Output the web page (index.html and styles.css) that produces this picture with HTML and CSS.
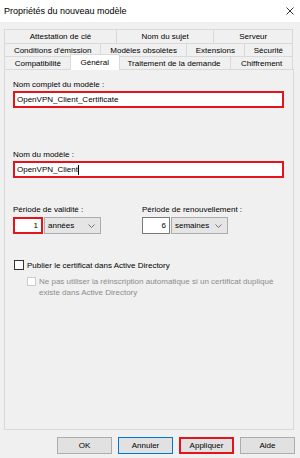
FILE: index.html
```html
<!DOCTYPE html>
<html lang="fr">
<head>
    <meta charset="UTF-8">
    <title>Propriétés du nouveau modèle</title>
    <link rel="stylesheet" href="styles.css">
</head>
<body>
    <div class="dialog">
        <div class="titlebar">
            <span class="title">Propriétés du nouveau modèle</span>
            <svg class="close" width="8" height="8" viewBox="0 0 8 8">
                <path d="M0.5 0.5 L7.5 7.5 M7.5 0.5 L0.5 7.5" stroke="#222" stroke-width="0.9" fill="none"/>
            </svg>
        </div>

        <div class="tabs">
            <div class="tab-row first">
                <div class="tab">Attestation de clé</div>
                <div class="tab">Nom du sujet</div>
                <div class="tab">Serveur</div>
            </div>
            <div class="tab-row">
                <div class="tab">Conditions d'émission</div>
                <div class="tab">Modèles obsolètes</div>
                <div class="tab">Extensions</div>
                <div class="tab">Sécurité</div>
            </div>
            <div class="tab-row">
                <div class="tab">Compatibilité</div>
                <div class="tab active">Général</div>
                <div class="tab">Traitement de la demande</div>
                <div class="tab">Chiffrement</div>
            </div>
        </div>

        <div class="page">
            <div class="field-label">Nom complet du modèle :</div>
            <div class="text-input marked">OpenVPN_Client_Certificate</div>

            <div class="field-label second">Nom du modèle :</div>
            <div class="text-input marked">OpenVPN_Client<span class="caret"></span></div>

            <div class="periods">
                <div class="period">
                    <div class="field-label">Période de validité :</div>
                    <div class="period-inputs">
                        <div class="num-input marked">1</div>
                        <div class="select">années
                            <svg width="7" height="4" viewBox="0 0 7 4"><path d="M0.5 0.5 L3.5 3.5 L6.5 0.5" stroke="#555" stroke-width="0.8" fill="none"/></svg>
                        </div>
                    </div>
                </div>
                <div class="period">
                    <div class="field-label">Période de renouvellement :</div>
                    <div class="period-inputs">
                        <div class="num-input">6</div>
                        <div class="select">semaines
                            <svg width="7" height="4" viewBox="0 0 7 4"><path d="M0.5 0.5 L3.5 3.5 L6.5 0.5" stroke="#555" stroke-width="0.8" fill="none"/></svg>
                        </div>
                    </div>
                </div>
            </div>

            <div class="check">
                <span class="box"></span>
                <span>Publier le certificat dans Active Directory</span>
            </div>
            <div class="check sub disabled">
                <span class="box"></span>
                <span>Ne pas utiliser la réinscription automatique si un certificat dupliqué existe dans Active Directory</span>
            </div>
        </div>

        <div class="buttons">
            <div class="btn">OK</div>
            <div class="btn default">Annuler</div>
            <div class="btn marked">Appliquer</div>
            <div class="btn">Aide</div>
        </div>
    </div>
</body>
</html>
```

FILE: styles.css
```css
body, html {
    margin: 0;
    padding: 0;
    background-color: #f0f0f0;
    font-family: 'Liberation Sans', Arial, sans-serif;
    font-size: 8px;
    color: #000000;
}

.dialog {
    width: 300px;
    height: 458px;
    overflow: hidden;
}

.titlebar {
    height: 22px;
    background-color: #ffffff;
    display: flex;
    align-items: center;
    justify-content: space-between;
    padding: 0 6px 0 4px;
}

.title {
    font-size: 9px;
}

.close {
    margin-top: -1px;
}

/* onglets */
.tabs {
    margin: 7px 7px 0 4px;
}

.tab-row {
    display: flex;
    height: 13px;
}

.tab-row.first {
    height: 14px;
}

.tab {
    flex: 1 1 auto;
    padding: 0 6px;
    border: 1px solid #d9d9d9;
    border-bottom: none;
    margin-left: -1px;
    display: flex;
    align-items: center;
    justify-content: center;
    white-space: nowrap;
}

.tab:first-child {
    margin-left: 0;
}

.tab.active {
    background-color: #ffffff;
    margin: -2px -2px -1px -2px;
    position: relative;
    z-index: 2;
    padding-bottom: 1px;
}

/* page */
.page {
    margin: 0 6px 0 4px;
    height: 361px;
    box-sizing: border-box;
    border: 1px solid #d9d9d9;
    padding: 10px 9px 0 8px;
}

.field-label {
    line-height: 10px;
    height: 10px;
}

.field-label.second {
    margin-top: 42px;
}

.text-input {
    height: 17px;
    box-sizing: border-box;
    background-color: #ffffff;
    border: 1px solid #7a7a7a;
    display: flex;
    align-items: center;
    padding-left: 3px;
}

.text-input.marked, .num-input.marked {
    border: 2px solid #e2141c;
    padding-left: 2px;
}

.field-label + .text-input {
    margin-top: 1px;
}

.caret {
    display: inline-block;
    width: 1px;
    height: 10px;
    background-color: #000000;
}

.periods {
    display: grid;
    grid-template-columns: 129px auto;
    margin-top: 27px;
}

.period-inputs {
    display: flex;
    margin-top: 2px;
}

.num-input {
    width: 28px;
    height: 17px;
    box-sizing: border-box;
    background-color: #ffffff;
    border: 1px solid #7a7a7a;
    display: flex;
    align-items: center;
    justify-content: flex-end;
    padding-right: 3px;
}

.num-input.marked {
    width: 30px;
    padding-right: 3px;
}

.select {
    width: 57px;
    height: 17px;
    box-sizing: border-box;
    margin-left: 1px;
    background-color: #e5e5e5;
    border: 1px solid #acacac;
    display: flex;
    align-items: center;
    justify-content: space-between;
    padding: 0 5px 0 3px;
}

.check {
    display: flex;
    align-items: flex-start;
    margin-top: 26px;
    line-height: 11px;
}

.check .box {
    flex: none;
    width: 10px;
    height: 10px;
    box-sizing: border-box;
    border: 1px solid #333333;
    background-color: #ffffff;
    margin: 0 3px 0 1px;
}

.check.sub {
    margin: 5px 0 0 13px;
}

.check.disabled {
    color: #8c8c8c;
}

.check.disabled .box {
    border-color: #cccccc;
    width: 9px;
    height: 9px;
    margin-top: 1px;
}

/* boutons */
.buttons {
    display: flex;
    justify-content: flex-end;
    gap: 6px;
    margin-top: 7px;
    padding-right: 5px;
}

.btn {
    width: 55px;
    height: 17px;
    box-sizing: border-box;
    background-color: #e1e1e1;
    border: 1px solid #adadad;
    display: flex;
    align-items: center;
    justify-content: center;
}

.btn.default {
    border-color: #0078d7;
}

.btn.marked {
    border: 2px solid #e2141c;
}
```
